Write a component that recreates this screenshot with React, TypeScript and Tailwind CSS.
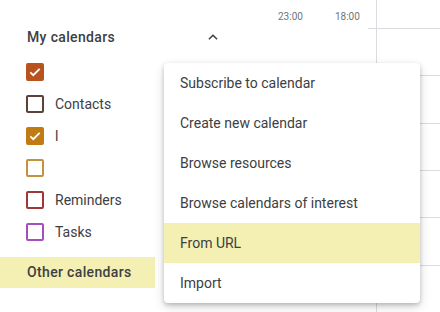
import { ReactNode } from "react";

type Cal = { label: ReactNode; color: string; checked: boolean };

const calendars: Cal[] = [
  { label: "", color: "#b8531f", checked: true },
  { label: "Contacts", color: "#5b4239", checked: false },
  { label: "l", color: "#c07b12", checked: true },
  { label: "", color: "#c4913e", checked: false },
  { label: "Reminders", color: "#9e3838", checked: false },
  { label: "Tasks", color: "#a44fc0", checked: false },
];

const menuItems = [
  "Subscribe to calendar",
  "Create new calendar",
  "Browse resources",
  "Browse calendars of interest",
  "From URL",
  "Import",
];

function Checkbox({ color, checked }: { color: string; checked: boolean }) {
  return (
    <div
      className="flex h-[18px] w-[18px] items-center justify-center rounded-[2px] border-2"
      style={{ borderColor: color, backgroundColor: checked ? color : "transparent" }}
    >
      {checked && (
        <svg width="16" height="16" viewBox="0 0 24 24">
          <path d="M4 12.5l5 5L20 6.5" fill="none" stroke="#fff" strokeWidth="3.2" />
        </svg>
      )}
    </div>
  );
}

export default function App() {
  return (
    <div className="relative flex h-[312px] w-[440px] overflow-hidden bg-white font-['Roboto','Liberation_Sans',sans-serif] text-[#3c4043]">
      {/* sidebar */}
      <div className="flex w-[232px] flex-col">
        <div className="mt-[21px] flex h-8 items-center justify-between pl-[27px] pr-[12px]">
          <span className="text-[14px] font-medium tracking-[0.35px]">My calendars</span>
          <svg width="14" height="14" viewBox="0 0 24 24">
            <path d="M5 16l7-7 7 7" fill="none" stroke="#3c4043" strokeWidth="2.6" />
          </svg>
        </div>
        <div className="mt-[3px] flex flex-col">
          {calendars.map((c, i) => (
            <div key={i} className="flex h-8 items-center gap-[11px] pl-[26px]">
              <Checkbox color={c.color} checked={c.checked} />
              <span className="text-[14px]">{c.label}</span>
            </div>
          ))}
        </div>
        <div className="mt-[9px] flex h-[31px] w-[155px] items-center bg-[#f4efb3] pl-[27px]">
          <span className="text-[14px] font-medium tracking-[0.35px]">Other calendars</span>
        </div>
      </div>

      {/* time zone column */}
      <div className="flex w-[144px] flex-col">
        <div className="flex h-[28px] items-end pb-[4px] text-[10px] text-[#70757a]">
          <span className="ml-[46px]">23:00</span>
          <span className="ml-[32px]">18:00</span>
        </div>
        <div className="ml-[136px] h-px w-2 bg-[#dadce0]" />
      </div>

      {/* grid */}
      <div className="flex flex-1 flex-col border-l border-[#dadce0] pt-[28px]">
        {[0, 1, 2, 3, 4, 5].map((i) => (
          <div key={i} className="h-[48px] border-t border-[#dadce0]" />
        ))}
      </div>

      {/* dropdown menu */}
      <div className="absolute left-[164px] top-[63px] w-[256px] rounded-[4px] bg-white shadow-[0_2px_4px_rgba(0,0,0,0.2),0_4px_12px_rgba(0,0,0,0.14)]">
        {menuItems.map((m) => (
          <div
            key={m}
            className={`flex h-10 items-center pl-4 text-[14px] ${m === "From URL" ? "bg-[#f4efb3]" : ""}`}
          >
            {m}
          </div>
        ))}
      </div>
    </div>
  );
}
